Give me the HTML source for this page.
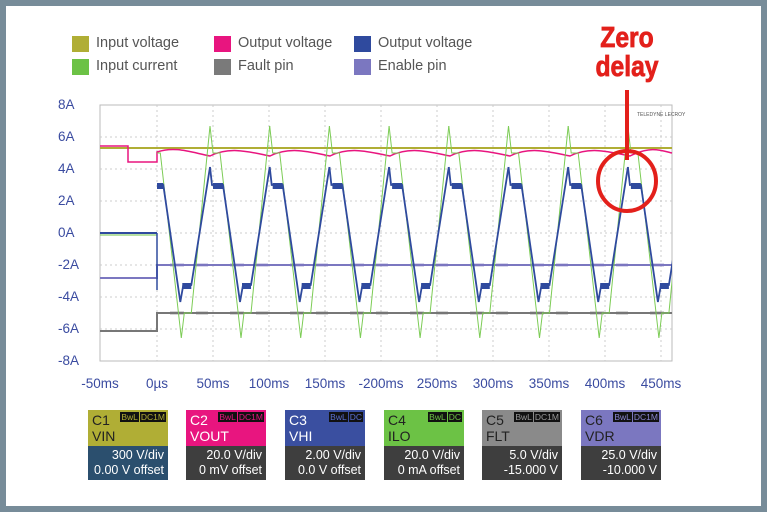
<!DOCTYPE html>
<html><head><meta charset="utf-8"><style>
html,body{margin:0;padding:0}
body{width:767px;height:512px;background:#778c99;position:relative;overflow:hidden;font-family:"Liberation Sans",sans-serif}
.in{position:absolute;left:6px;top:6px;width:755px;height:500px;background:#fff}
.lg{position:absolute;font-size:14.5px;color:#555;}
.lg i{position:absolute;left:-24px;top:1px;width:17px;height:16px}
.yl{position:absolute;left:58px;width:32px;text-align:left;color:#3a4ba0;font-size:13.5px}
.xl{position:absolute;top:376px;width:60px;text-align:center;color:#3a4ba0;font-size:13.5px}
.bx{position:absolute;top:410px;width:80px;height:70px;font-size:12.5px}
.bx .t{height:36px;color:#222;position:relative;line-height:16px;padding:2px 0 0 4px;box-sizing:border-box;font-size:14px}
.bx .b{height:34px;background:#3e3e3e;color:#fff;text-align:right;padding:2px 4px 0 0;line-height:15px;box-sizing:border-box;font-size:12.5px;white-space:nowrap}
.tg{position:absolute;top:2px;right:2px;font-size:8.5px;line-height:11px}
.tg span{background:#111;padding:0 1px;margin-left:1px}
</style></head><body>
<div class="in"></div>
<div class="lg" style="left:96px;top:35px"><i style="background:#b0ae35"></i>Input voltage</div>
<div class="lg" style="left:96px;top:58px"><i style="background:#6cc245"></i>Input current</div>
<div class="lg" style="left:238px;top:35px"><i style="background:#e8157f"></i>Output voltage</div>
<div class="lg" style="left:238px;top:58px"><i style="background:#7a7a7a"></i>Fault pin</div>
<div class="lg" style="left:378px;top:35px"><i style="background:#2f4a9e"></i>Output voltage</div>
<div class="lg" style="left:378px;top:58px"><i style="background:#7b77c0"></i>Enable pin</div>
<div style="position:absolute;left:572px;top:24px;width:110px;text-align:center;color:#e3201b;font-weight:900;font-size:29px;line-height:29px;font-family:'Liberation Sans',sans-serif;transform:scaleX(0.85);-webkit-text-stroke:0.8px #e3201b">Zero<br>delay</div>
<div class="yl" style="top:97px">8A</div><div class="yl" style="top:129px">6A</div><div class="yl" style="top:161px">4A</div><div class="yl" style="top:193px">2A</div><div class="yl" style="top:225px">0A</div><div class="yl" style="top:257px">-2A</div><div class="yl" style="top:289px">-4A</div><div class="yl" style="top:321px">-6A</div><div class="yl" style="top:353px">-8A</div>
<div class="xl" style="left:70px">-50ms</div><div class="xl" style="left:127px">0µs</div><div class="xl" style="left:183px">50ms</div><div class="xl" style="left:239px">100ms</div><div class="xl" style="left:295px">150ms</div><div class="xl" style="left:351px">-200ms</div><div class="xl" style="left:407px">250ms</div><div class="xl" style="left:463px">300ms</div><div class="xl" style="left:519px">350ms</div><div class="xl" style="left:575px">400ms</div><div class="xl" style="left:631px">450ms</div>
<svg style="position:absolute;left:0;top:0" width="767" height="512">
<defs>
<clipPath id="cp"><rect x="157" y="100" width="515" height="265"/></clipPath>
<g id="bl"><path d="M0,167 L2,185 L13,185 L30,302 L33,285 L41,285 L59.7,167" fill="none" stroke="#2f4a9e" stroke-width="1.8"/><path d="M3,186 L13,186 M32,286 L41,286" stroke="#2f4a9e" stroke-width="6"/></g>
<g id="gr"><path d="M0,126 L3,153 L10,153 L31,338 L34,313 L41,313 L59.7,126" fill="none" stroke="#7ccc55" stroke-width="1"/></g>
<g id="nz"><path d="M0,0H14 M26,0H38" stroke-width="3" stroke-opacity="0.6"/></g>
</defs>
<rect x="100" y="105" width="572" height="256" fill="none" stroke="#bbb"/>
<g stroke="#ccc" stroke-dasharray="2,3" stroke-width="1">
<path d="M100,137H672M100,169H672M100,201H672M100,233H672M100,265H672M100,297H672M100,329H672"/>
<path d="M157,105V361M213,105V361M269,105V361M325,105V361M381,105V361M437,105V361M493,105V361M549,105V361M605,105V361M661,105V361"/>
</g>
<path d="M100,148H672" stroke="#b0ae35" stroke-width="2"/>
<path d="M100,146H128V162H157V152 C175,146 190,152 210,156 C230,146 250,152 270,156 C290,146 310,152 330,156 C350,146 370,152 390,156 C410,146 430,152 450,156 C470,146 490,152 510,156 C530,146 550,152 570,156 C590,146 610,152 630,156 C650,146 660,150 672,153" fill="none" stroke="#e8157f" stroke-width="1.5"/>
<path d="M100,278H157V265H672" stroke="#7b77c0" stroke-width="2" fill="none"/>
<path d="M100,331H157V313H672" stroke="#777" stroke-width="2" fill="none"/>
<g stroke="#7b77c0" clip-path="url(#cp)">
<use href="#nz" x="170" y="265"/><use href="#nz" x="230" y="265"/><use href="#nz" x="290" y="265"/><use href="#nz" x="350" y="265"/><use href="#nz" x="410" y="265"/><use href="#nz" x="470" y="265"/><use href="#nz" x="530" y="265"/><use href="#nz" x="590" y="265"/><use href="#nz" x="650" y="265"/>
</g>
<g stroke="#777" clip-path="url(#cp)">
<use href="#nz" x="170" y="313"/><use href="#nz" x="230" y="313"/><use href="#nz" x="290" y="313"/><use href="#nz" x="350" y="313"/><use href="#nz" x="410" y="313"/><use href="#nz" x="470" y="313"/><use href="#nz" x="530" y="313"/><use href="#nz" x="590" y="313"/><use href="#nz" x="650" y="313"/>
</g>
<path d="M100,233H157" stroke="#2f4a9e" stroke-width="2"/>
<path d="M100,235H157" stroke="#6cc245" stroke-width="1"/>
<g clip-path="url(#cp)">
<use href="#gr" x="150.3"/><use href="#gr" x="210"/><use href="#gr" x="269.7"/><use href="#gr" x="329.4"/><use href="#gr" x="389.1"/><use href="#gr" x="448.8"/><use href="#gr" x="508.5"/><use href="#gr" x="568.2"/><use href="#gr" x="627.9"/>
<use href="#bl" x="150.3"/><use href="#bl" x="210"/><use href="#bl" x="269.7"/><use href="#bl" x="329.4"/><use href="#bl" x="389.1"/><use href="#bl" x="448.8"/><use href="#bl" x="508.5"/><use href="#bl" x="568.2"/><use href="#bl" x="627.9"/>
</g>
<path d="M157,233V290" stroke="#2f4a9e" stroke-width="1.5"/>
<path d="M627,90V160" stroke="#e3201b" stroke-width="4"/>
<ellipse cx="627" cy="181" rx="29" ry="30" fill="none" stroke="#e3201b" stroke-width="4"/>
<text x="637" y="116" font-size="5" fill="#555" font-family="Liberation Sans">TELEDYNE LECROY</text>
</svg>
<div class="bx" style="left:88px"><div class="t" style="background:#b0ae35">C1<br>VIN<div class="tg" style="color:#b0ae35"><span>BwL</span><span>DC1M</span></div></div><div class="b" style="background:#2b4f6e">300 V/div<br>0.00 V offset</div></div>
<div class="bx" style="left:186px"><div class="t" style="background:#e8157f;color:#fff">C2<br>VOUT<div class="tg" style="color:#e8157f"><span>BwL</span><span>DC1M</span></div></div><div class="b">20.0 V/div<br>0 mV offset</div></div>
<div class="bx" style="left:285px"><div class="t" style="background:#3a4fa0;color:#fff">C3<br>VHI<div class="tg" style="color:#5a6fd0"><span>BwL</span><span>DC</span></div></div><div class="b">2.00 V/div<br>0.0 V offset</div></div>
<div class="bx" style="left:384px"><div class="t" style="background:#6cc245">C4<br>ILO<div class="tg" style="color:#6cc245"><span>BwL</span><span>DC</span></div></div><div class="b">20.0 V/div<br>0 mA offset</div></div>
<div class="bx" style="left:482px"><div class="t" style="background:#8a8a8a">C5<br>FLT<div class="tg" style="color:#999"><span>BwL</span><span>DC1M</span></div></div><div class="b">5.0 V/div<br>-15.000 V</div></div>
<div class="bx" style="left:581px"><div class="t" style="background:#7b77c0">C6<br>VDR<div class="tg" style="color:#8a86d0"><span>BwL</span><span>DC1M</span></div></div><div class="b">25.0 V/div<br>-10.000 V</div></div>
</body></html>
